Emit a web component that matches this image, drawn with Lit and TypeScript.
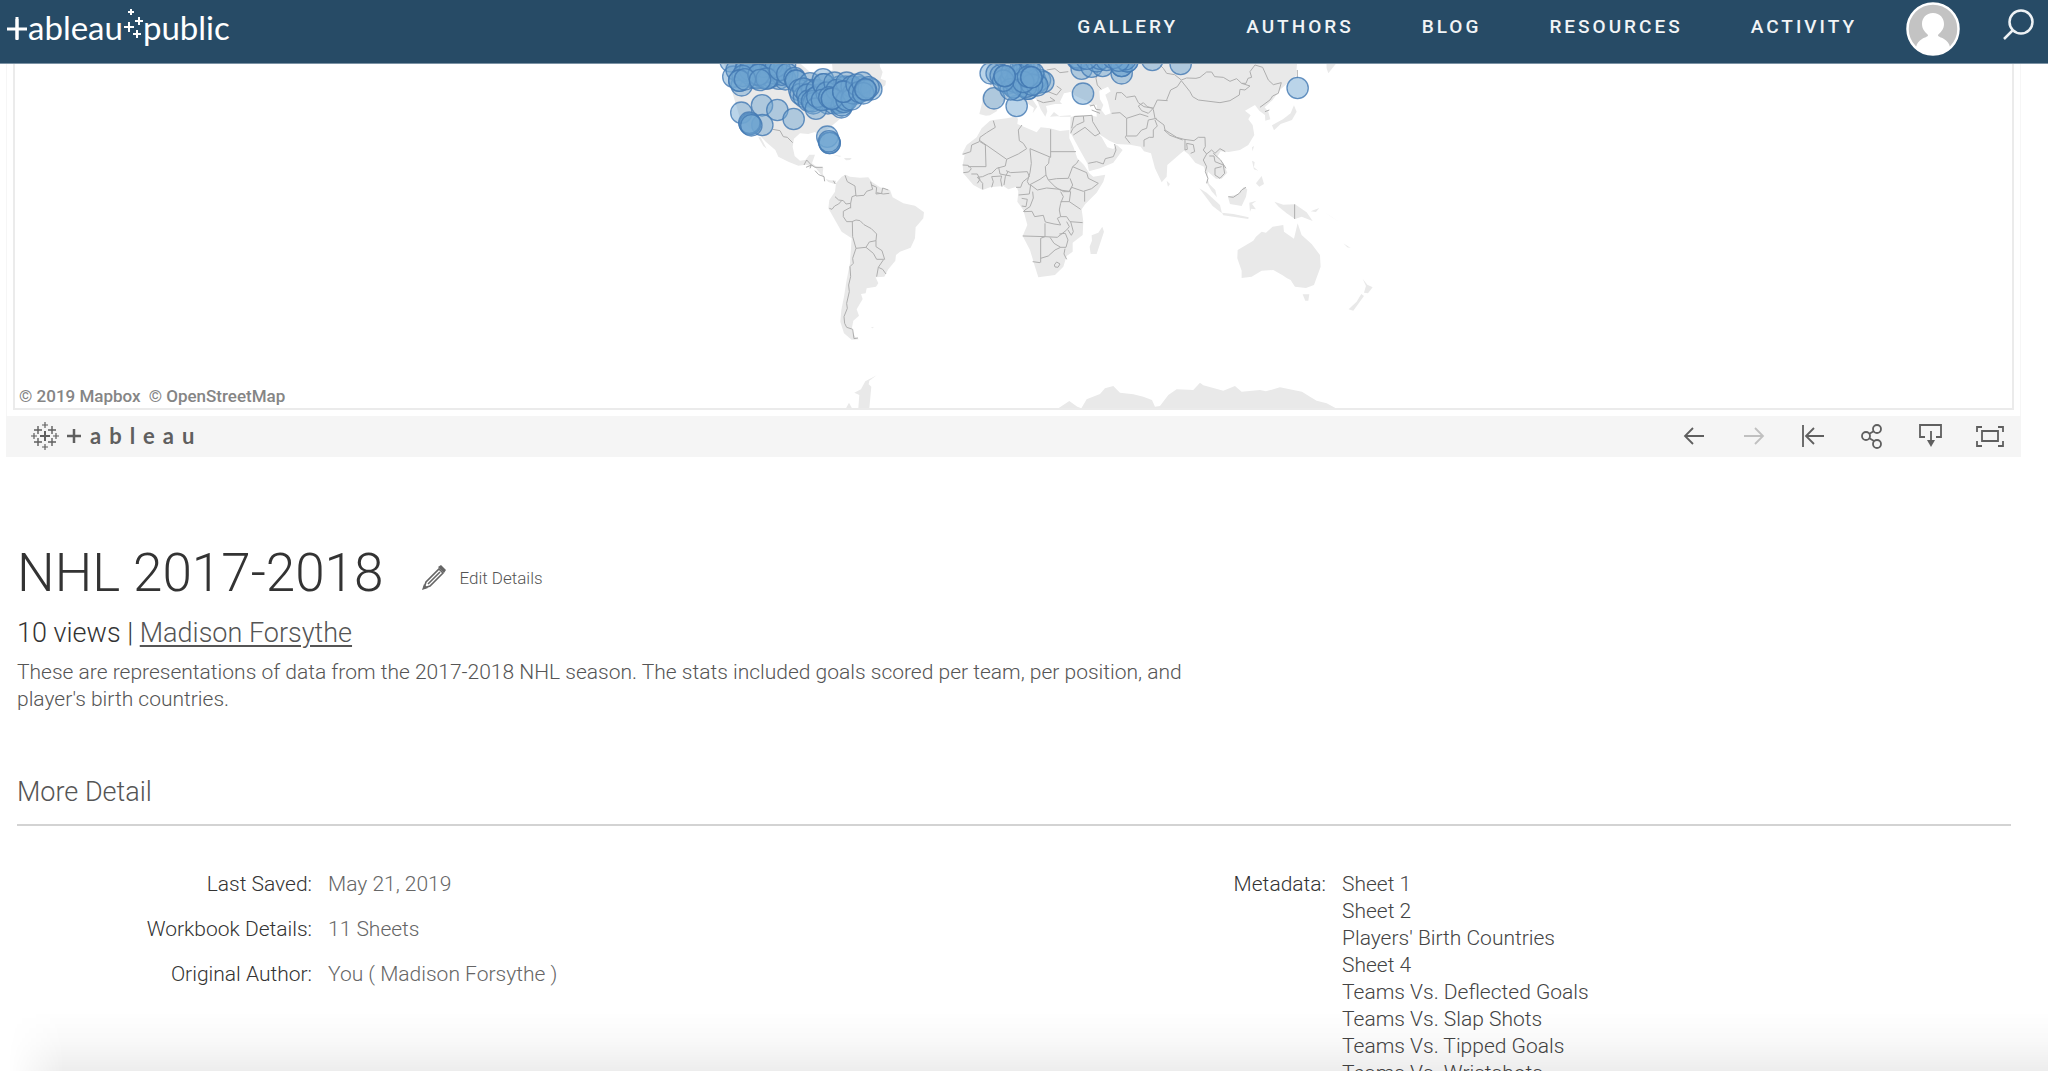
import { LitElement, html, css, svg } from "lit";
import { customElement } from "lit/decorators.js";

type Point = [number, number];

const NAV = ["Gallery", "Authors", "Blog", "Resources", "Activity"];

const DETAILS = [
  ["Last Saved:", "May 21, 2019"],
  ["Workbook Details:", "11 Sheets"],
  ["Original Author:", "You ( Madison Forsythe )"],
];

const SHEETS = [
  "Sheet 1",
  "Sheet 2",
  "Players' Birth Countries",
  "Sheet 4",
  "Teams Vs. Deflected Goals",
  "Teams Vs. Slap Shots",
  "Teams Vs. Tipped Goals",
  "Teams Vs. Wristshots",
];

/* Marks and land are stored in thirds of a pixel, one set per hemisphere. */
const WEST_MARKS: Point[] = [
  [92, 34], [100, 80], [125, 106], [110, 60], [140, 45], [160, 82], [190, 84], [214, 80], [236, 86], [256, 88],
  [150, 30], [180, 40], [205, 50], [232, 36], [255, 46], [168, 64], [198, 66], [222, 70], [246, 74], [146, 70],
  [170, 84], [204, 84], [136, 62], [160, 50], [190, 50], [216, 44], [228, 50], [150, 60], [128, 78], [118, 92], [118, 92],
  [176, 74], [176, 74], [200, 86], [240, 60], [262, 72], [135, 88], [284, 84], [288, 92], [288, 92], [180, 90],
  [124, 188], [186, 166], [232, 180], [281, 207], [187, 225], [150, 222], [150, 222], [148, 218], [154, 226],
  [382, 260], [389, 279], [389, 279], [387, 274], [298, 120], [302, 132], [312, 140], [330, 100], [336, 120],
  [310, 116], [322, 134], [326, 152], [350, 120], [360, 134], [376, 148], [384, 160], [402, 160], [410, 150], [418, 158],
  [444, 140], [450, 120], [462, 118], [470, 130], [480, 112], [420, 110], [396, 120], [436, 110], [346, 144],
  [340, 160], [336, 154], [348, 176], [352, 140], [369, 88], [371, 103], [371, 103], [380, 128], [366, 150],
  [404, 98], [410, 120], [424, 172], [426, 166], [432, 156], [440, 98], [388, 142], [396, 146], [396, 146],
  [440, 150], [455, 110], [460, 130], [455, 148], [430, 125], [430, 125], [470, 104], [478, 126], [488, 98],
  [514, 118], [506, 112], [490, 130], [498, 120], [496, 118],
];
const EAST_MARKS: Point[] = [
  [152, 70], [170, 70], [182, 76], [162, 145], [230, 168], [205, 100], [222, 112], [222, 112], [214, 86], [226, 96],
  [236, 90], [240, 60], [250, 44], [262, 50], [250, 66], [252, 84], [244, 104], [234, 76], [270, 62], [288, 100],
  [286, 90], [300, 90], [310, 96], [264, 116], [264, 116], [258, 110], [216, 66], [232, 120], [212, 118], [292, 106],
  [280, 70], [276, 104], [250, 96], [190, 92], [194, 78], [194, 78], [264, 80], [274, 82], [274, 82],
  [425, 56], [412, 26], [412, 22], [418, 30], [455, 50], [488, 48], [470, 34], [480, 26], [500, 30], [545, 70],
  [545, 48], [545, 48], [562, 34], [562, 34], [556, 28], [520, 24], [536, 32], [440, 26], [637, 30], [722, 42],
  [429, 131], [1073, 114],
];

const WEST_LAND = [
  "M60,0 L95,120 120,205 150,235 175,252 198,276 226,300 235,320 265,335 295,347 318,344 345,352 365,376 385,396 405,402 409,392 390,391 376,387 368,370 370,353 350,350 336,340 345,314 328,314 316,330 300,332 284,318 278,290 282,266 300,250 325,252 345,246 362,262 372,278 380,240 412,214 432,196 460,170 495,150 520,132 556,106 558,92 542,86 548,66 540,50 536,0Z",
  "M175,262 182,262 200,296 190,288Z",
  "M437,374 450,380 480,383 505,382 515,395 540,412 570,420 578,442 610,460 645,467 672,487 670,505 647,532 645,565 632,593 600,605 588,615 586,632 565,658 553,680 527,682 535,700 528,710 500,715 497,730 483,732 488,747 470,778 477,797 460,812 455,838 465,860 477,868 455,869 432,850 421,815 424,780 432,740 440,690 450,640 455,565 425,545 405,510 385,475 388,450 405,425 408,400 425,380Z",
  "M398,314 425,318 418,320Z M432,324 455,324 450,330 438,331Z M512,833 522,830 518,835Z",
  "M438,1075 447,1058 456,1075Z M475,1075 478,1035 463,1028 483,1018 496,994 530,976 508,992 506,1003 514,1010 508,1075Z",
];
const EAST_LAND = [
  "M115,0 150,60 150,110 128,135 126,160 118,192 138,197 150,196 170,184 185,158 212,142 236,138 256,156 282,174 278,190 292,170 272,140 290,148 302,178 316,200 322,184 318,168 345,162 372,162 372,135 392,126 410,140 450,168 470,164 470,200 452,196 408,196 396,200 360,200 342,186 330,200 392,196 390,245 402,268 425,310 442,340 447,364 480,355 520,338 548,300 530,284 520,297 502,292 485,262 473,250 492,262 508,272 530,282 570,284 602,290 612,304 633,310 645,355 665,397 680,380 682,345 720,312 732,302 745,312 766,338 792,350 802,385 808,402 826,420 831,442 815,424 800,398 804,365 828,386 845,386 862,368 850,340 832,320 842,304 866,306 900,300 925,285 943,255 938,225 925,208 932,196 915,182 945,165 958,182 975,195 976,212 991,208 985,185 974,172 998,150 1022,118 1068,78 1075,0Z",
  "M160,210 200,205 225,200 234,206 232,222 262,235 290,247 302,232 330,235 360,243 388,240 388,265 400,290 412,325 432,345 448,370 460,380 496,374 490,395 470,428 436,462 425,478 430,515 428,555 398,578 398,605 380,618 370,650 345,675 295,682 285,650 270,600 248,558 262,525 250,480 232,455 235,425 230,410 205,418 190,408 150,412 128,420 100,405 70,370 68,345 74,315 66,312 80,285 110,262 125,235 150,212Z",
  "M487,530 492,545 470,612 452,612 449,590 456,572 455,556 475,548Z",
  "M1158,0 1192,36 1165,70 1160,55Z M1062,166 1070,185 1056,210 1022,222 1002,241 996,226 1030,207 1052,190Z",
  "M680,392 690,402 684,410Z M778,415 800,428 840,465 846,490 818,468Z M846,488 880,492 926,502 925,507 850,496Z M864,440 896,432 912,410 922,418 918,440 905,468 870,462Z",
  "M928,458 950,452 936,462 948,478 934,476 930,485Z M936,332 944,336 942,352 955,362 942,358Z M948,400 965,378 972,402 958,410Z M936,292 942,288 938,304Z",
  "M1003,455 1030,464 1065,463 1100,487 1118,513 1085,500 1065,507 1040,490 1016,470Z M1112,484 1138,474 1128,486Z M1150,484 1198,516 1176,502Z M1210,580 1232,594 1222,592Z",
  "M1073,520 1085,555 1115,582 1140,615 1142,650 1122,705 1098,714 1065,710 1052,690 1040,684 1028,676 1000,660 965,662 935,680 905,684 905,662 892,625 893,600 940,572 948,560 965,545 978,548 998,530 1030,525 1032,545 1062,566Z",
  "M1088,733 1108,733 1105,752 1096,752Z M1268,686 1282,704 1298,712 1284,730 1272,728 1278,708Z M1264,732 1272,738 1240,782 1226,778 1250,755Z",
  "M355,1075 388,1053 412,1070 424,1075 440,1048 480,1032 495,1015 520,1008 540,1028 580,1033 610,1040 636,1050 645,1070 660,1068 685,1035 710,1018 760,1020 780,998 790,1006 850,1022 885,1008 905,1025 960,1020 978,1024 1020,1012 1086,1025 1110,1040 1130,1052 1160,1060 1188,1075Z",
];

const WEST_BORDERS =
  "M218,238 240,242 250,260 262,262 278,278 M312,345 320,330 334,345 330,355 M318,352 335,345 345,352 368,352 M345,362 356,374 372,380 374,394 M400,392 406,402 M435,376 442,395 465,408 468,438 492,436 500,424 518,418 512,395 M515,405 530,412 528,432 545,430 548,414 565,420 M530,428 550,432 568,430 M405,440 416,450 430,452 438,462 452,460 456,440 468,436 M452,460 452,475 M388,475 396,478 404,468 416,462 425,452 M452,472 430,484 430,500 440,515 456,515 468,510 480,512 492,524 514,536 530,552 528,572 M457,515 458,560 468,595 498,592 508,576 528,572 528,590 546,602 554,628 530,628 520,610 498,592 M550,630 535,652 530,680 M535,652 548,658 558,672 M468,595 458,625 460,640 450,650 452,680 446,705 448,725 440,760 442,775 432,800 434,820 440,832 458,838 462,866 474,864";
const EAST_BORDERS =
  "M160,212 166,232 140,248 120,262 118,275 95,285 92,305 68,313 M120,272 200,328 235,312 260,296 250,280 238,272 235,240 246,225 M136,285 138,350 84,350 M68,345 84,346 94,356 86,366 70,368 M94,372 112,372 120,388 112,400 M136,285 120,275 M270,296 332,322 332,238 M332,305 408,305 M328,322 326,340 316,350 318,375 300,388 268,405 262,395 270,368 274,340 270,296 M200,328 196,348 170,355 155,370 145,372 128,380 112,382 M198,362 212,368 262,365 268,380 248,396 242,412 228,412 M112,382 128,400 128,418 M155,412 160,395 155,380 185,378 182,390 186,410 M176,352 180,372 212,378 M192,405 196,380 204,365 M318,375 325,390 350,386 385,385 398,350 M325,390 345,410 360,420 388,424 398,405 390,385 M398,350 410,340 416,330 M398,350 440,368 445,385 475,400 455,416 430,424 395,412 388,424 M434,424 434,455 M236,435 268,432 272,405 292,420 320,414 360,418 370,425 392,425 388,455 422,478 M245,445 262,448 258,470 245,468 M278,425 280,444 270,470 255,480 250,486 M362,425 370,440 362,460 358,480 362,500 352,505 362,525 342,522 316,516 310,496 284,500 276,484 252,485 M362,455 388,455 M362,500 380,500 390,515 428,518 M315,520 315,560 248,558 M315,560 352,562 380,540 388,530 380,515 M302,638 302,565 315,560 M278,635 300,638 M302,625 325,618 345,600 362,592 342,580 330,562 M362,592 378,592 384,570 376,550 358,552 M375,596 372,612 380,628 M343,645 350,636 360,642 354,652 345,651Z M392,515 400,545 394,556 384,540 M392,250 398,236 410,225 432,215 430,198 402,200 395,235 M430,198 456,196 458,215 480,250 465,258 435,232 400,255 M445,340 470,335 490,342 496,326 520,320 528,300 524,282 M450,168 462,165 468,178 482,180 M455,180 480,190 M526,150 530,128 545,128 560,142 585,138 595,158 612,170 640,175 652,150 683,152 M515,190 540,188 560,205 600,192 625,200 M560,205 560,255 556,262 570,280 M560,258 590,258 605,240 620,235 625,210 650,205 M595,168 610,158 622,170 640,175 625,190 605,182Z M612,290 612,270 628,262 640,262 640,240 652,228 645,210 M640,178 645,205 672,225 675,240 710,262 732,268 762,272 775,262 795,262 796,290 M672,240 690,256 728,270 M735,268 735,300 742,298 740,280 760,284 764,305 752,310 M796,290 790,300 800,312 815,300 825,310 840,296 856,305 M800,312 790,330 800,350 796,365 804,385 800,400 M808,318 822,318 825,335 850,345 854,370 840,385 825,375 825,355 845,350 M820,310 842,330 858,355 M660,45 670,55 680,70 704,74 724,90 740,84 768,85 780,82 800,66 815,66 824,80 850,82 870,94 890,86 905,100 930,108 915,120 900,118 898,135 870,152 840,158 775,150 758,140 750,125 724,92 M724,92 712,110 692,120 680,150 M905,100 918,100 924,85 935,82 930,65 945,45 968,52 985,90 1000,104 1024,98 1015,130 998,138 990,150 960,172 M975,185 988,180 M465,45 475,60 468,85 472,105 484,118 M300,130 322,124 350,135 364,118 350,108 M290,150 310,158 345,152 330,142 M320,60 345,56 360,68 385,65 M865,440 880,442 898,430 905,420 918,412 M1064,463 1064,507 M1072,60 1072,85";

const mark = ([x, y]: Point) => svg`<circle class="mark" cx=${x} cy=${y} r="32"></circle>`;
const plus = (x: number, y: number, r: number, w: number) =>
  svg`<path d=${`M${x - r},${y}H${x + r}M${x},${y - r}V${y + r}`} stroke="currentColor" stroke-width=${w} fill="none"></path>`;

@customElement("world-map")
export class WorldMap extends LitElement {
  static styles = css`
    :host { display: block; }
    svg { display: block; width: 100%; height: 344px; }
    .land { fill: #e9e9e9; }
    .water { fill: #fff; }
    .border { fill: none; stroke: #aeaeae; stroke-width: 3; stroke-linejoin: round; }
    .mark { fill: #6fa5d0; fill-opacity: 0.48; stroke: #4379b3; stroke-opacity: 0.8; stroke-width: 4; }
  `;
  render() {
    return html`<svg viewBox="14 64 1999 344" preserveAspectRatio="xMidYMid slice" role="img" aria-label="Players' Birth Countries">
      <g transform="translate(700 50) scale(.3333)">
        ${WEST_LAND.map((d) => svg`<path class="land" d=${d}></path>`)}
        <path class="water" d="M300,40 H396 L398,60 372,70 330,66Z"></path>
        <path class="border" d=${WEST_BORDERS}></path>
        ${WEST_MARKS.map(mark)}
      </g>
      <g transform="translate(940 50) scale(.3333)">
        ${EAST_LAND.map((d) => svg`<path class="land" d=${d}></path>`)}
        <path class="water" d="M372,130 392,126 402,136 455,160 440,166 400,158 370,166 360,155Z M478,122 504,110 512,124 496,134 504,156 512,190 496,196 484,180 490,165 480,148Z"></path>
        <path class="border" d=${EAST_BORDERS}></path>
        ${EAST_MARKS.map(mark)}
      </g>
    </svg>`;
  }
}

@customElement("app-root")
export class AppRoot extends LitElement {
  static styles = css`
    :host {
      display: block;
      position: relative;
      height: 100vh;
      overflow: hidden;
      background: #fff;
      color: #666;
      font: 300 21px/27px Roboto, "Liberation Sans", sans-serif;
    }
    * { box-sizing: border-box; }
    h1, h2, p, dl, dd, ul { margin: 0; padding: 0; font-weight: 300; }
    ul { list-style: none; }
    a { color: inherit; text-decoration: none; }
    button { display: flex; align-items: center; padding: 0; border: 0; background: none; color: inherit; font: inherit; cursor: pointer; }
    svg { display: block; flex: none; }

    .header {
      display: flex;
      align-items: center;
      height: 64px;
      padding: 0 13px 0 7px;
      background: #274b66;
      border-bottom: 1px solid #7b92a4;
      color: #fff;
    }
    .logo { display: flex; align-items: center; height: 56px; margin-right: auto; font: 400 33px/48px Lato, sans-serif; }
    .logo span { padding-bottom: 10px; }
    .nav { display: flex; gap: 68px; padding-bottom: 10px; font-size: 19px; font-weight: 500; letter-spacing: 3px; text-transform: uppercase; color: #f1f4f6; }
    .avatar { margin: 0 43px 6px 49px; }
    .search { padding-bottom: 16px; }

    .viz { margin: 0 27px 0 6px; border: solid #f6f6f6; border-width: 0 1px; padding: 0 6px 6px; }
    .frame { position: relative; border: 2px solid #ebebeb; border-top: 0; }
    .credit { position: absolute; left: 4px; bottom: 0; display: flex; gap: 8px; font-size: 17px; line-height: 24px; font-weight: 500; color: #858585; }
    .toolbar { display: flex; align-items: center; justify-content: space-between; height: 41px; margin: 0 27px 0 6px; padding: 0 15px 2px 25px; background: #f5f5f5; color: #5f5f5f; }
    .brand { display: flex; align-items: center; gap: 8px; font: 700 22px/36px Lato, sans-serif; letter-spacing: 8px; }
    .tools { display: flex; gap: 27px; }
    .tools .off { color: #c0c0c0; }

    .details { padding: 84px 37px 0 17px; }
    .title { display: flex; align-items: center; gap: 38px; }
    h1 { font-size: 53px; line-height: 64px; color: #333; }
    .edit { gap: 12px; padding-top: 10px; font-size: 17px; font-weight: 300; color: #555; }
    .byline { padding: 12px 0 10px; font-size: 27px; line-height: 32px; color: #333; }
    .byline a { color: #555; text-decoration: underline; text-decoration-thickness: 2px; text-underline-offset: 3px; }
    .about { max-width: 1220px; color: #555; }
    h2 { margin-top: 63px; padding-bottom: 16px; border-bottom: 2px solid #d3d3d3; font-size: 27px; line-height: 32px; color: #555; }
    .columns { display: grid; grid-template-columns: 1212fr 782fr; padding-top: 45px; }
    .rows { display: grid; gap: 18px; align-content: start; }
    .row { display: grid; grid-template-columns: 295px 1fr; gap: 16px; }
    .meta .row { grid-template-columns: 97px 1fr; }
    dt { text-align: right; color: #333; }
    .meta dd { color: #444; }
    .fade {
      position: absolute; left: 0; right: 0; bottom: 0; height: 60px; pointer-events: none;
      background: linear-gradient(rgba(0, 0, 0, 0), rgba(0, 0, 0, 0.025) 50%, rgba(0, 0, 0, 0.07));
      -webkit-mask-image: linear-gradient(90deg, transparent 8px, #000 64px);
      mask-image: linear-gradient(90deg, transparent 8px, #000 64px);
    }
  `;

  private tool(label: string, icon: unknown, off = false) {
    return html`<button class=${off ? "off" : ""} aria-label=${label} ?disabled=${off}>
      <svg width="32" height="32" fill="none" stroke="currentColor" stroke-width="1.8">${icon}</svg>
    </button>`;
  }

  render() {
    return html`
      <header class="header">
        <a class="logo" href="#" aria-label="tableau public">
          <svg width="21" height="56">${plus(10, 25, 10, 3)}<path d="M10,13V36" stroke="currentColor" stroke-width="3"></path></svg>
          <span>ableau</span>
          <svg width="20" height="56">${plus(8, 8, 3, 2)}${plus(16, 17, 4, 2)}${plus(6, 23, 5, 2)}${plus(14, 30, 4, 2)}</svg>
          <span>public</span>
        </a>
        <nav class="nav">${NAV.map((n) => html`<a href="#">${n}</a>`)}</nav>
        <button class="avatar" aria-label="Profile">
          <svg width="54" height="54">
            <circle cx="27" cy="27" r="25.5" fill="#c3c3c3" stroke="#fff" stroke-width="2.5"></circle>
            <path d="M27,11c7,0 11,5 11,11 0,5 -3,8 -6,11 0,2 3,2 6,4 3,2 5,4 6,8 -4,5 -11,7 -17,7s-13,-2 -17,-7c1,-4 3,-6 6,-8 3,-2 6,-2 6,-4 -3,-3 -6,-6 -6,-11 0,-6 4,-11 11,-11Z" fill="#fff"></path>
          </svg>
        </button>
        <button class="search" aria-label="Search">
          <svg width="32" height="32" fill="none" stroke="#eef2f5" stroke-width="2.5">
            <circle cx="18" cy="14" r="11.5"></circle>
            <path d="M10,22L1,31"></path>
          </svg>
        </button>
      </header>

      <section class="viz">
        <div class="frame">
          <world-map></world-map>
          <div class="credit"><span>© 2019 Mapbox</span><span>© OpenStreetMap</span></div>
        </div>
      </section>
      <div class="toolbar">
        <a class="brand" href="#" aria-label="tableau">
          <svg width="28" height="28">
            ${plus(14, 14, 5, 2)}
            ${[[14, 3], [14, 25], [3, 14], [25, 14]].map(([x, y]) => plus(x, y, 3, 1.2))}
            ${[[7, 8], [21, 8], [7, 20], [21, 20]].map(([x, y]) => plus(x, y, 4, 1.4))}
          </svg>
          <svg width="15" height="18">${plus(7, 9, 7, 2.5)}</svg>
          <span>ableau</span>
        </a>
        <div class="tools">
          ${this.tool("Undo", svg`<path d="M25,16H7M14,8L6,16L14,24"></path>`)}
          ${this.tool("Redo", svg`<path d="M6,16H24M17,8L25,16L17,24"></path>`, true)}
          ${this.tool("Reset", svg`<path d="M6,5V27M27,16H10M17,8L9,16L17,24"></path>`)}
          ${this.tool("Share", svg`<circle cx="10" cy="16" r="4"></circle><circle cx="21" cy="9" r="4"></circle><circle cx="21" cy="24" r="4"></circle><path d="M13,14L18,11M13,18L18,21"></path>`)}
          ${this.tool("Download", svg`<path d="M10,17H5V5H26V17H21M16,11V22"></path><path d="M12,20H20L16,27Z" fill="currentColor" stroke="none"></path>`)}
          ${this.tool("Full screen", svg`<path d="M3,12V7H8M24,7H29V12M29,21V26H24M8,26H3V21M8,11H24V21H8Z"></path>`)}
        </div>
      </div>

      <main class="details">
        <div class="title">
          <h1>NHL 2017-2018</h1>
          <button class="edit">
            <svg width="26" height="26" fill="none" stroke="#666" stroke-width="1.6">
              <path d="M3,23L5,17L18,4L22,8L9,21Z"></path>
              <path d="M17,2L20,0L25,5L23,8Z" fill="#666" stroke="none"></path>
              <path d="M7,19L19,7"></path>
              <path d="M1,25L3,19L7,23Z" fill="#666" stroke="none"></path>
            </svg>
            Edit Details
          </button>
        </div>
        <p class="byline">10 views | <a href="#">Madison Forsythe</a></p>
        <p class="about">These are representations of data from the 2017-2018 NHL season. The stats included goals scored per team, per position, and player's birth countries.</p>
        <h2>More Detail</h2>
        <div class="columns">
          <dl class="rows">${DETAILS.map(([k, v]) => html`<div class="row"><dt>${k}</dt><dd>${v}</dd></div>`)}</dl>
          <dl class="meta">
            <div class="row"><dt>Metadata:</dt><dd><ul>${SHEETS.map((s) => html`<li>${s}</li>`)}</ul></dd></div>
          </dl>
        </div>
      </main>
      <div class="fade"></div>
    `;
  }
}
